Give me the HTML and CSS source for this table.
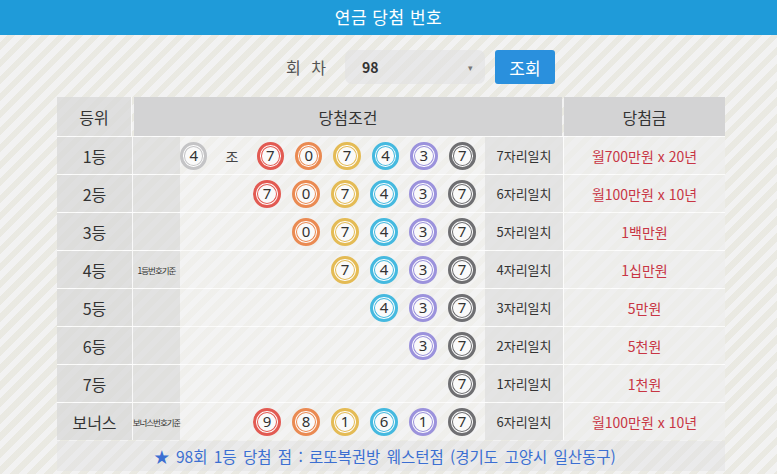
FILE: index.html
```html
<!DOCTYPE html>
<html lang="ko">
<head>
<meta charset="utf-8">
<title>연금 당첨 번호</title>
<link rel="stylesheet" href="styles.css">
</head>
<body>
<header class="topbar">연금 당첨 번호</header>
<div class="search">
  <span class="search-label">회 차</span>
  <div class="select"><span class="select-value">98</span><span class="caret">▾</span></div>
  <button class="btn">조회</button>
</div>
<div class="table">
  <div class="thead">
    <div class="th c-rank">등위</div>
    <div class="th c-cond">당첨조건</div>
    <div class="th c-prize">당첨금</div>
  </div>

  <div class="row">
    <div class="td c-rank">1등</div>
    <div class="td c-note"></div>
    <div class="td c-balls">
      <span class="ball b-gray-l">4</span><span class="jo">조</span>
      <span class="ball b-red">7</span><span class="ball b-orange">0</span><span class="ball b-yellow">7</span><span class="ball b-blue">4</span><span class="ball b-purple">3</span><span class="ball b-gray">7</span>
    </div>
    <div class="td c-match">7자리일치</div>
    <div class="td c-money">월700만원 x 20년</div>
  </div>

  <div class="row">
    <div class="td c-rank">2등</div>
    <div class="td c-note"></div>
    <div class="td c-balls">
      <span class="ball b-red">7</span><span class="ball b-orange">0</span><span class="ball b-yellow">7</span><span class="ball b-blue">4</span><span class="ball b-purple">3</span><span class="ball b-gray">7</span>
    </div>
    <div class="td c-match">6자리일치</div>
    <div class="td c-money">월100만원 x 10년</div>
  </div>

  <div class="row">
    <div class="td c-rank">3등</div>
    <div class="td c-note"></div>
    <div class="td c-balls">
      <span class="ball b-orange">0</span><span class="ball b-yellow">7</span><span class="ball b-blue">4</span><span class="ball b-purple">3</span><span class="ball b-gray">7</span>
    </div>
    <div class="td c-match">5자리일치</div>
    <div class="td c-money">1백만원</div>
  </div>

  <div class="row">
    <div class="td c-rank">4등</div>
    <div class="td c-note">1등번호기준</div>
    <div class="td c-balls">
      <span class="ball b-yellow">7</span><span class="ball b-blue">4</span><span class="ball b-purple">3</span><span class="ball b-gray">7</span>
    </div>
    <div class="td c-match">4자리일치</div>
    <div class="td c-money">1십만원</div>
  </div>

  <div class="row">
    <div class="td c-rank">5등</div>
    <div class="td c-note"></div>
    <div class="td c-balls">
      <span class="ball b-blue">4</span><span class="ball b-purple">3</span><span class="ball b-gray">7</span>
    </div>
    <div class="td c-match">3자리일치</div>
    <div class="td c-money">5만원</div>
  </div>

  <div class="row">
    <div class="td c-rank">6등</div>
    <div class="td c-note"></div>
    <div class="td c-balls">
      <span class="ball b-purple">3</span><span class="ball b-gray">7</span>
    </div>
    <div class="td c-match">2자리일치</div>
    <div class="td c-money">5천원</div>
  </div>

  <div class="row">
    <div class="td c-rank">7등</div>
    <div class="td c-note"></div>
    <div class="td c-balls">
      <span class="ball b-gray">7</span>
    </div>
    <div class="td c-match">1자리일치</div>
    <div class="td c-money">1천원</div>
  </div>

  <div class="row">
    <div class="td c-rank">보너스</div>
    <div class="td c-note">보너스번호기준</div>
    <div class="td c-balls">
      <span class="ball b-red">9</span><span class="ball b-orange">8</span><span class="ball b-yellow">1</span><span class="ball b-blue">6</span><span class="ball b-purple">1</span><span class="ball b-gray">7</span>
    </div>
    <div class="td c-match">6자리일치</div>
    <div class="td c-money">월100만원 x 10년</div>
  </div>

  <div class="footer">★ 98회 1등 당첨 점 : 로또복권방 웨스턴점 (경기도 고양시 일산동구)</div>
</div>
</body>
</html>
```

FILE: styles.css
```css
* { box-sizing: border-box; }

html, body {
  margin: 0;
  padding: 0;
}

body {
  width: 777px;
  height: 474px;
  overflow: hidden;
  font-family: "Noto Sans CJK KR", "Noto Sans", sans-serif;
  color: #333;
  background-color: #ebebeb;
  background-image: repeating-linear-gradient(135deg, rgba(255,255,255,0.35) 0 6px, rgba(230,228,200,0.25) 6px 12px);
}

.topbar {
  height: 35px;
  background: #1f9bd9;
  color: #ffffff;
  font-size: 17px;
  line-height: 33px;
  text-align: center;
  letter-spacing: 0.5px;
}

.search {
  display: flex;
  align-items: center;
  height: 62px;
  padding-left: 286px;
  padding-top: 2px;
}

.search-label {
  font-size: 16px;
  color: #555;
  letter-spacing: 3px;
  width: 59px;
}

.select {
  width: 140px;
  height: 34px;
  border-radius: 7px;
  background: rgba(225,225,227,0.6);
  display: flex;
  align-items: center;
  justify-content: space-between;
  padding: 0 12px 0 17px;
}

.select-value {
  font-size: 14px;
  font-weight: 700;
  color: #333;
}

.caret {
  font-size: 9px;
  color: #777;
}

.btn {
  margin-left: 10px;
  width: 60px;
  height: 34px;
  border: none;
  border-radius: 3px;
  background: #2a90dd;
  color: #fff;
  font-family: inherit;
  font-size: 17px;
  padding: 0;
}

.table {
  margin-left: 57px;
  width: 668px;
}

.thead {
  display: flex;
  height: 39px;
  gap: 2px;
}

.th {
  background: #d3d3d4;
  font-size: 16px;
  color: #333;
  display: flex;
  align-items: center;
  justify-content: center;
}

.thead .c-rank { width: 75px; }
.thead .c-cond { width: 428px; }
.thead .c-prize { width: 161px; }

.row {
  display: flex;
  height: 38px;
  border-top: 1px solid rgba(255,255,255,0.8);
}

.td {
  display: flex;
  align-items: center;
  justify-content: center;
}

.c-rank {
  width: 76px;
  font-size: 16px;
  color: #333;
  background: rgba(218,218,218,0.8);
  border-right: 1px solid rgba(255,255,255,0.8);
}

.c-note {
  width: 47px;
  font-size: 8.5px;
  letter-spacing: -1px;
  white-space: nowrap;
  color: #333;
  background: rgba(220,220,220,0.75);
}

.c-balls {
  width: 305px;
  justify-content: flex-end;
  padding-right: 9px;
  gap: 11px;
  background: rgba(244,244,244,0.55);
}

.c-match {
  width: 78px;
  font-size: 13px;
  color: #333;
  background: rgba(226,226,226,0.85);
}

.c-money {
  width: 162px;
  font-size: 14px;
  color: #c83544;
  background: rgba(238,238,238,0.7);
  border-left: 1px solid rgba(255,255,255,0.8);
}

.jo {
  width: 28px;
  text-align: center;
  font-size: 14px;
  color: #444;
}

.ball {
  width: 28px;
  height: 28px;
  border-radius: 50%;
  border: 3px solid var(--c);
  box-shadow: inset 0 0 0 1px #fff, inset 0 0 0 2px var(--c);
  background: #fafafa;
  display: flex;
  align-items: center;
  justify-content: center;
  font-family: "Noto Sans", "Liberation Sans", sans-serif;
  font-size: 15px;
  color: #333;
  line-height: 1;
}

.b-red { --c: #e25a52; }
.b-orange { --c: #ea8a52; }
.b-yellow { --c: #e4bb55; }
.b-blue { --c: #45b9df; }
.b-purple { --c: #9b92dc; }
.b-gray { --c: #6f6f72; }
.b-gray-l { --c: #c4c4c6; }

.footer {
  height: 30px;
  display: flex;
  align-items: center;
  justify-content: center;
  font-size: 15.5px;
  color: #3b6fd2;
  word-spacing: 2px;
  background: rgba(225,225,228,0.5);
  margin-top: 1px;
  padding-right: 12px;
}
```
